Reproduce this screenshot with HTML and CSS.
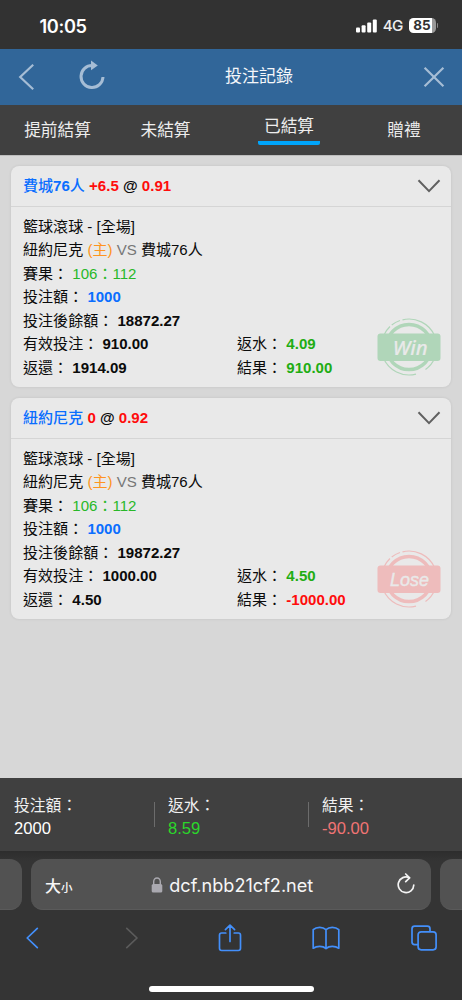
FILE: index.html
```html
<!DOCTYPE html>
<html lang="zh-Hant">
<head>
<meta charset="utf-8">
<meta name="viewport" content="width=device-width, initial-scale=1">
<title>投注記錄</title>
<link rel="stylesheet" href="styles.css">
</head>
<body>
<div class="phone">
  <div class="status">
    <span class="time">10:05</span>
    <span class="status-right">
      <svg class="signal" width="21" height="14" viewBox="0 0 21 14" fill="#fff"><rect x="0" y="8.5" width="4" height="5" rx="1"/><rect x="5.6" y="6.2" width="4" height="7.3" rx="1"/><rect x="11.2" y="3.4" width="4" height="10.1" rx="1"/><rect x="16.8" y="0.5" width="4" height="13" rx="1"/></svg>
      <span class="network">4G</span>
      <span class="battery"><span class="level">85</span></span>
      <span class="battery-tip"></span>
    </span>
  </div>
  <header class="navbar">
    <svg class="nav-back" width="17" height="28" viewBox="0 0 17 28" fill="none" stroke="#a6bdd5" stroke-width="2.2"><path d="M15.2 1.7 2.2 14 15.2 26.3"/></svg>
    <svg class="nav-refresh" width="28" height="30" viewBox="0 0 28 30"><path d="M14.5 5.5A11 11 0 1 0 25 17" fill="none" stroke="#a6bdd5" stroke-width="3"/><path d="M13 0.5 19.8 5.4 13 10.3Z" fill="#a6bdd5"/></svg>
    <h1 class="nav-title">投注記錄</h1>
    <svg class="nav-close" width="22" height="22" viewBox="0 0 22 22" fill="none" stroke="#a6bdd5" stroke-width="2.2"><path d="M1.6 1.8 20.4 20.2M20.4 1.8 1.6 20.2"/></svg>
  </header>
  <nav class="tabs">
    <span class="tab">提前結算</span>
    <span class="tab">未結算</span>
    <span class="tab active">已結算</span>
    <span class="tab">贈禮</span>
  </nav>
  <main class="records">
    <section class="card">
      <div class="card-head">
        <div class="pick"><span class="team"><span class="han">費城</span>76<span class="han">人</span></span> <span class="odds">+6.5</span> @ <span class="odds">0.91</span></div>
        <svg class="chevron" width="24" height="14" viewBox="0 0 24 14" fill="none" stroke="#606060" stroke-width="2"><path d="M1.5 1.2 12 12.1 22.5 1.2"/></svg>
      </div>
      <div class="card-body">
        <div>籃球滾球 - [全場]</div>
        <div>紐約尼克 <span class="home">(主)</span> <span class="versus">VS</span> 費城76人</div>
        <div>賽果： <span class="score">106：112</span></div>
        <div>投注額： <b class="stake">1000</b></div>
        <div>投注後餘額： <b>18872.27</b></div>
        <div class="pair"><span>有效投注： <b>910.00</b></span><span>返水： <b class="gain">4.09</b></span></div>
        <div class="pair"><span>返還： <b>1914.09</b></span><span>結果： <b class="gain">910.00</b></span></div>
      </div>
      <svg class="stamp win" viewBox="0 0 64 60">
        <circle cx="32" cy="30" r="22.5" class="ring"/>
        <path class="orbit" d="M6.7 18.5A28 28 0 0 1 13 9.5M14.7 8A28 28 0 0 1 23 3.5M25.5 2.8A28 28 0 0 1 57.5 18.5M58 40.5A28 28 0 0 1 48.5 52.5M39 57.1A28 28 0 0 1 6.2 40.5"/>
        <rect class="plate" x="0.5" y="16.5" width="63" height="27.5" rx="3"/>
        <text x="33.2" y="37.5" font-size="20" textLength="35" lengthAdjust="spacingAndGlyphs">Win</text>
      </svg>
    </section>
    <section class="card">
      <div class="card-head">
        <div class="pick"><span class="team"><span class="han">紐約尼克</span></span> <span class="odds">0</span> @ <span class="odds">0.92</span></div>
        <svg class="chevron" width="24" height="14" viewBox="0 0 24 14" fill="none" stroke="#606060" stroke-width="2"><path d="M1.5 1.2 12 12.1 22.5 1.2"/></svg>
      </div>
      <div class="card-body">
        <div>籃球滾球 - [全場]</div>
        <div>紐約尼克 <span class="home">(主)</span> <span class="versus">VS</span> 費城76人</div>
        <div>賽果： <span class="score">106：112</span></div>
        <div>投注額： <b class="stake">1000</b></div>
        <div>投注後餘額： <b>19872.27</b></div>
        <div class="pair"><span>有效投注： <b>1000.00</b></span><span>返水： <b class="gain">4.50</b></span></div>
        <div class="pair"><span>返還： <b>4.50</b></span><span>結果： <b class="loss">-1000.00</b></span></div>
      </div>
      <svg class="stamp lose" viewBox="0 0 64 60">
        <circle cx="32" cy="30" r="22.5" class="ring"/>
        <path class="orbit" d="M6.7 18.5A28 28 0 0 1 13 9.5M14.7 8A28 28 0 0 1 23 3.5M25.5 2.8A28 28 0 0 1 57.5 18.5M58 40.5A28 28 0 0 1 48.5 52.5M39 57.1A28 28 0 0 1 6.2 40.5"/>
        <rect class="plate" x="0.5" y="16.5" width="63" height="27.5" rx="3"/>
        <text x="32.5" y="36.6" font-size="17.5" textLength="39" lengthAdjust="spacingAndGlyphs">Lose</text>
      </svg>
    </section>
  </main>
  <footer class="totals">
    <div class="total"><span class="label">投注額：</span><span class="amount">2000</span></div>
    <div class="total"><span class="label">返水：</span><span class="amount up">8.59</span></div>
    <div class="total"><span class="label">結果：</span><span class="amount down">-90.00</span></div>
  </footer>
  <div class="browser">
    <div class="address-row">
      <div class="stub left"></div>
      <div class="address">
        <span class="text-size">大<small>小</small></span>
        <span class="host"><svg width="12" height="16" viewBox="0 0 12 16"><path d="M2.7 8V4.6a3.3 3.6 0 0 1 6.6 0V8" fill="none" stroke="#aaa9b0" stroke-width="1.4"/><rect x="0.7" y="7" width="10.6" height="8.5" rx="1.6" fill="#aaa9b0"/></svg><span class="domain">dcf.nbb21cf2.net</span></span>
        <svg class="reload" width="18" height="21" viewBox="0 0 18 21" fill="none" stroke="#f4f4f4" stroke-width="1.7" stroke-linecap="round" stroke-linejoin="round"><path d="M12.3 4.7A7.8 7.8 0 1 0 16.8 12"/><path d="M8.7 1 12.6 4.9 8.7 8.6"/></svg>
      </div>
      <div class="stub right"></div>
    </div>
    <div class="toolbar">
      <svg width="13" height="22" viewBox="0 0 13 22" fill="none" stroke="#438ffa" stroke-width="1.7" stroke-linecap="round" stroke-linejoin="round"><path d="M11.3 1.4 1.2 11 11.3 20.6"/></svg>
      <svg width="13" height="22" viewBox="0 0 13 22" fill="none" stroke="#5b5b5b" stroke-width="1.7" stroke-linecap="round" stroke-linejoin="round"><path d="M1.8 1.4 12 11 1.8 20.6"/></svg>
      <svg width="24" height="28" viewBox="0 0 24 28" fill="none" stroke="#438ffa" stroke-width="1.7" stroke-linecap="round" stroke-linejoin="round"><path d="M7.8 9H3.6Q1.5 9 1.5 11.2V24.3Q1.5 26.5 3.6 26.5H20.4Q22.5 26.5 22.5 24.3V11.2Q22.5 9 20.4 9H16.2M12 17.5V1.3M7.4 5.7 12 1.2 16.6 5.7"/></svg>
      <svg width="28" height="24" viewBox="0 0 28 24" fill="none" stroke="#438ffa" stroke-width="1.7" stroke-linejoin="round"><path d="M14 3.6Q11.5 1.3 7.7 1.3 3.7 1.3 1.2 3.6V22.2Q4 20.3 7.7 20.3 11.5 20.3 14 22.5 16.5 20.3 20.3 20.3 24 20.3 26.8 22.2V3.6Q24.3 1.3 20.3 1.3 16.5 1.3 14 3.6V22.5"/></svg>
      <svg width="26" height="26" viewBox="0 0 26 26" fill="none" stroke="#438ffa" stroke-width="1.7"><rect x="7.1" y="6.8" width="18" height="18" rx="3"/><path d="M7.1 19.6H3.6Q1 19.6 1 17V3.8Q1 1.2 3.6 1.2H16.4Q19 1.2 19 3.8V6.8"/></svg>
    </div>
    <div class="home-indicator"></div>
  </div>
</div>
</body>
</html>
```
FILE: styles.css
```css
* { box-sizing: border-box; }
body {
  margin: 0;
  background: #d7d7d7;
  font-family: "Liberation Sans", "Noto Sans CJK TC", sans-serif;
  color: #0b0b0b;
}
svg { display: block; flex: none; }
.phone { width: 462px; height: 1000px; display: flex; flex-direction: column; overflow: hidden; }

.status {
  height: 49px;
  display: flex;
  justify-content: space-between;
  align-items: center;
  padding: 2px 24px 0 39.5px;
  background: #323232;
  color: #fff;
  font-family: Inter, sans-serif;
}
.time { font-size: 18.2px; font-weight: 600; letter-spacing: -0.35px; }
.status-right { display: flex; align-items: center; }
.signal { margin-right: -1px; }
.network { margin: 0 6px 0 7px; font-size: 15.2px; font-weight: 500; letter-spacing: -0.8px; color: #eee; }
.battery {
  width: 27px;
  height: 15px;
  border-radius: 4.5px;
  background: linear-gradient(90deg, #fff 0 23px, #999 23px);
  color: #323232;
  text-align: center;
}
.level { display: block; font-size: 13.5px; font-weight: 700; line-height: 15px; }
.battery-tip { width: 1.5px; height: 5px; margin-left: 1px; border-radius: 0 2px 2px 0; background: #888; }

.navbar {
  height: 56px;
  display: grid;
  grid-template-columns: 60px 147px 68px 1fr;
  align-items: center;
  padding: 0 17px 0 18px;
  background: #316699;
}
.nav-title { margin: 0; font-size: 17px; font-weight: 400; line-height: 24px; color: #f4f6f9; white-space: nowrap; }
.nav-refresh { margin: -4px 0 0; }
.nav-close { justify-self: end; }

.tabs {
  height: 50px;
  display: grid;
  grid-template-columns: 115px 101px 146px 84px;
  background: #404040;
  color: #ededed;
  font-size: 16.7px;
  line-height: 51px;
}
.tab { justify-self: center; }
.tab.active { height: 40px; padding: 0 6px; line-height: 44px; border-bottom: 4px solid #00a5fb; border-radius: 2px; }

.records { flex: 1; display: flex; flex-direction: column; gap: 11px; padding: 10px 11px 11px; border-top: 1px solid #bdbdbd; }
.card {
  position: relative;
  height: 221px;
  flex: none;
  border-radius: 8px;
  background: #e9e9e9;
  box-shadow: 0 0 3px rgba(0, 0, 0, .1);
  font-size: 15.05px;
}
.card-head {
  height: 40.5px;
  display: flex;
  justify-content: space-between;
  align-items: center;
  padding: 0 10.5px 0 12px;
  border-bottom: 1.5px solid #d5d5d5;
}
.pick { font-weight: 700; line-height: 22px; white-space: pre; }
.team { color: #0a6eff; }
.han { font-weight: 500; }
.odds, .loss { color: #ff0c0c; }
.card-body { padding: 8.4px 12px 0; line-height: 23.5px; }
.card-body > div { height: 23.5px; white-space: nowrap; }
.card-body .pair { display: grid; grid-template-columns: 214px 1fr; }
.home { color: #ff9420; }
.versus { color: #777; }
.score { color: #28b828; }
.stake { color: #0a6eff; }
.gain { color: #1fad14; }

.stamp { position: absolute; right: 10.5px; bottom: 10px; width: 64px; height: 60px; }
.stamp text { fill: #e9e9e9; font-family: "Noto Sans", "Open Sans", sans-serif; font-style: italic; font-weight: 500; text-anchor: middle; stroke: #e9e9e9; stroke-width: .15px; }
.stamp.lose text { font-family: "Liberation Sans", sans-serif; font-weight: 400; stroke-width: .4px; }
.ring { fill: none; stroke-width: 3.5; }
.orbit { fill: none; stroke-width: 1.2; }
.win .ring, .win .orbit { stroke: #b0d6b9; }
.win .plate { fill: #b0d6b9; }
.lose .ring, .lose .orbit { stroke: #eebcbc; }
.lose .plate { fill: #eebcbc; }

.totals {
  height: 73px;
  display: flex;
  align-items: flex-start;
  padding-top: 15px;
  background: #404040;
  color: #f0f0f0;
}
.total { flex: 1; display: flex; flex-direction: column; padding-left: 14px; font-size: 15.8px; line-height: 23.5px; background: linear-gradient(#6c6c6c, #6c6c6c) 0 9px / 1px 25px no-repeat; }
.total:first-child { background: none; }
.label { padding-top: 1px; line-height: 23.5px; margin-bottom: -1px; }
.amount { font-size: 16.6px; color: #fff; }
.amount.up { color: #2bd72b; }
.amount.down { color: #f07474; }

.browser { height: 149px; padding-top: 8px; background: linear-gradient(#2d2d2d, #343434 10px); }
.address-row { height: 51px; display: flex; gap: 9px; }
.stub, .address { background: #525252; border-bottom: 1px solid #5a5a5a; }
.stub { width: 22px; }
.stub.left { border-radius: 0 12px 12px 0; }
.stub.right { border-radius: 12px 0 0 12px; }
.address { width: 400px; display: flex; align-items: center; justify-content: space-between; padding: 1px 16.5px 0 14px; border-radius: 12px; color: #f6f6f6; }
.text-size { font-size: 16px; font-weight: 500; }
.text-size small { font-size: 11.5px; }
.host { display: flex; align-items: center; gap: 6.5px; margin-left: -5px; }
.domain { font-family: Inter, sans-serif; font-size: 18.1px; }
.reload { margin-top: -3px; }
.toolbar { height: 56px; display: flex; justify-content: space-between; align-items: center; padding: 0 25px 0 26px; }
.toolbar svg:nth-child(2) { margin-left: 15px; }
.toolbar svg:nth-child(3) { margin-left: 9px; margin-right: -1px; }
.toolbar svg:nth-child(4) { margin-left: 1px; }
.home-indicator { width: 165px; height: 6px; margin: 20px auto 0; border-radius: 3px; background: #fff; }
```
